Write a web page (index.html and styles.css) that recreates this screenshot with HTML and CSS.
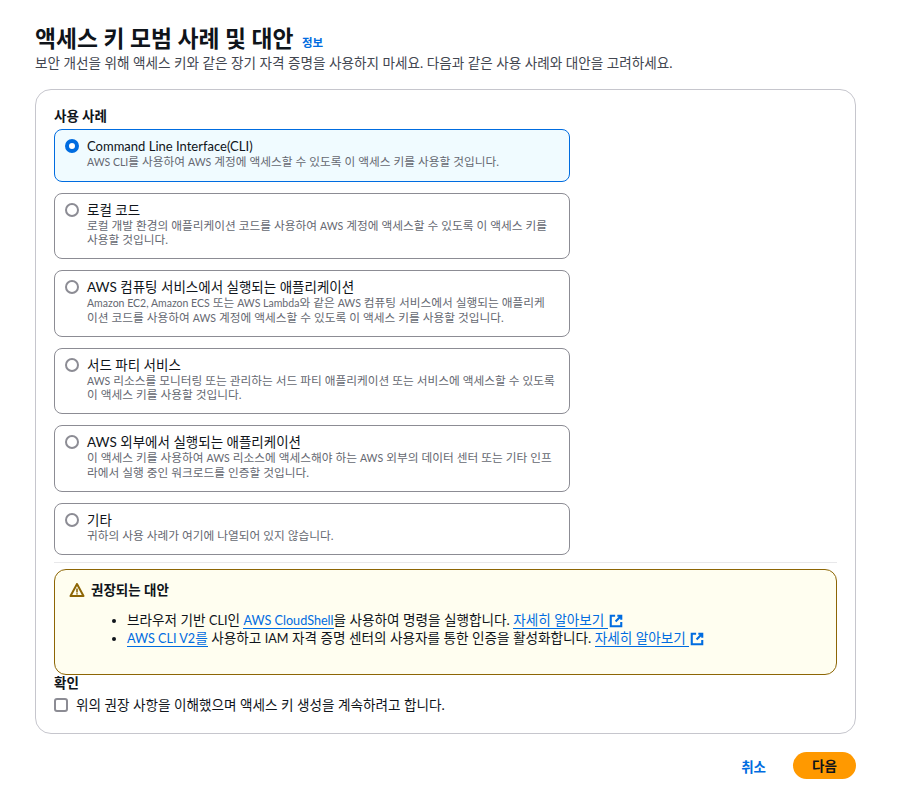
FILE: index.html
```html
<!DOCTYPE html>
<html lang="ko">
<head>
<meta charset="utf-8">
<title>액세스 키 모범 사례 및 대안</title>
<link rel="stylesheet" href="styles.css">
</head>
<body>
<main class="page">
  <header class="head">
    <h1 class="title">액세스 키 모범 사례 및 대안 <a class="info" href="#">정보</a></h1>
    <p class="desc">보안 개선을 위해 액세스 키와 같은 장기 자격 증명을 사용하지 마세요. 다음과 같은 사용 사례와 대안을 고려하세요.</p>
  </header>
  <section class="card">
    <div class="label">사용 사례</div>
    <div class="options">
      <div class="option selected">
        <span class="radio on"></span>
        <div class="otext"><div class="oname"><span class="en">Command Line Interface(CLI)</span></div><div class="odesc"><span class="en">AWS CLI</span>를 사용하여 <span class="en">AWS</span> 계정에 액세스할 수 있도록 이 액세스 키를 사용할 것입니다.</div></div>
      </div>
      <div class="option">
        <span class="radio"></span>
        <div class="otext"><div class="oname">로컬 코드</div><div class="odesc">로컬 개발 환경의 애플리케이션 코드를 사용하여 <span class="en">AWS</span> 계정에 액세스할 수 있도록 이 액세스 키를<br>사용할 것입니다.</div></div>
      </div>
      <div class="option">
        <span class="radio"></span>
        <div class="otext"><div class="oname">AWS 컴퓨팅 서비스에서 실행되는 애플리케이션</div><div class="odesc"><span class="en">Amazon EC2, Amazon ECS</span> 또는 <span class="en">AWS Lambda</span>와 같은 <span class="en">AWS</span> 컴퓨팅 서비스에서 실행되는 애플리케<br>이션 코드를 사용하여 <span class="en">AWS</span> 계정에 액세스할 수 있도록 이 액세스 키를 사용할 것입니다.</div></div>
      </div>
      <div class="option">
        <span class="radio"></span>
        <div class="otext"><div class="oname">서드 파티 서비스</div><div class="odesc"><span class="en">AWS</span> 리소스를 모니터링 또는 관리하는 서드 파티 애플리케이션 또는 서비스에 액세스할 수 있도록<br>이 액세스 키를 사용할 것입니다.</div></div>
      </div>
      <div class="option">
        <span class="radio"></span>
        <div class="otext"><div class="oname">AWS 외부에서 실행되는 애플리케이션</div><div class="odesc">이 액세스 키를 사용하여 <span class="en">AWS</span> 리소스에 액세스해야 하는 <span class="en">AWS</span> 외부의 데이터 센터 또는 기타 인프<br>라에서 실행 중인 워크로드를 인증할 것입니다.</div></div>
      </div>
      <div class="option">
        <span class="radio"></span>
        <div class="otext"><div class="oname">기타</div><div class="odesc">귀하의 사용 사례가 여기에 나열되어 있지 않습니다.</div></div>
      </div>
    </div>
    <hr class="divider">
    <div class="alert">
      <div class="alert-head">
        <svg class="warn" width="16" height="16" viewBox="0 0 16 16" fill="none" stroke="#8d6605" stroke-width="2" stroke-linejoin="round"><path d="M8 2 1.5 14h13z"/><path d="M8 6.5v4M8 11.2v1.4" stroke-width="1.6"/></svg>
        <span>권장되는 대안</span>
      </div>
      <ul class="alert-list">
        <li>브라우저 기반 <span class="en">CLI</span>인 <a class="link" href="#"><span class="en">AWS CloudShell</span></a>을 사용하여 명령을 실행합니다. <a class="link" href="#">자세히 알아보기 </a><svg class="ext" width="14" height="14" viewBox="0 0 16 16" fill="none" stroke="#006ce0" stroke-width="2.4"><path d="M7 2H2v12h12V9"/><path d="M9.5 2H14v4.5M14 2 7.5 8.5"/></svg></li>
        <li><a class="link" href="#"><span class="en">AWS CLI V2</span>를</a> 사용하고 <span class="en">IAM</span> 자격 증명 센터의 사용자를 통한 인증을 활성화합니다. <a class="link" href="#">자세히 알아보기 </a><svg class="ext" width="14" height="14" viewBox="0 0 16 16" fill="none" stroke="#006ce0" stroke-width="2.4"><path d="M7 2H2v12h12V9"/><path d="M9.5 2H14v4.5M14 2 7.5 8.5"/></svg></li>
      </ul>
    </div>
    <div class="label confirm">확인</div>
    <label class="check"><span class="box"></span><span>위의 권장 사항을 이해했으며 액세스 키 생성을 계속하려고 합니다.</span></label>
  </section>
  <footer class="actions">
    <a class="cancel" href="#">취소</a>
    <button class="next">다음</button>
  </footer>
</main>
</body>
</html>
```
FILE: styles.css
```css
* { box-sizing: border-box; }
html, body { margin: 0; background: #fff; }
body {
  font-family: Lato, "Noto Sans CJK KR", sans-serif;
  color: #0f141a;
  font-size: 13.5px;
}
.page { width: 902px; padding: 23px 46px 0 35px; }
.head { height: 66px; }
.title {
  margin: 0;
  font-size: 22.8px;
  line-height: 30px;
  font-weight: 700;
}
.info { font-size: 11.5px; font-weight: 700; color: #006ce0; text-decoration: none; margin-left: 3px; line-height: 1; }
.desc { margin: 2px 0 0; font-size: 13.6px; line-height: 16px; color: #424650; }
.card {
  height: 645px;
  border: 1px solid #c6c6cd;
  border-radius: 16px;
  padding: 18px;
}
.label { font-size: 13.5px; font-weight: 700; line-height: 16px; }
.options { width: 516px; margin-top: 5px; display: flex; flex-direction: column; gap: 11px; }
.option {
  display: flex;
  gap: 8px;
  border: 1px solid #8c8c94;
  border-radius: 8px;
  padding: 8px 10px 11px;
  min-height: 52.5px;
}
.option.selected { border-color: #006ce0; background: #f0fbff; }
.radio {
  flex: none;
  width: 14px;
  height: 14px;
  margin-top: 1px;
  border-radius: 50%;
  border: 2px solid #8c8c94;
  background: #fff;
}
.radio.on { border: 4px solid #006ce0; }
.otext { white-space: nowrap; }
.en { line-height: 1; }
.oname { font-size: 13.5px; line-height: 16px; }
.oname .en { font-size: .965em; }
.odesc { font-size: 11.7px; line-height: 14.75px; color: #656871; }
.odesc .en { font-size: .9em; }
.divider { margin: 7px 0 6px; border: 0; border-top: 1px solid #e8e8ea; }
.alert {
  height: 106px;
  border: 1px solid #8d6605;
  border-radius: 12px;
  background: #fffef0;
  padding: 12px 14px;
}
.alert-head { display: flex; align-items: center; gap: 6px; font-weight: 700; font-size: 13.5px; line-height: 16px; }
.warn { flex: none; }
.alert-list { margin: 13px 0 0; padding-left: 58px; font-size: 13.6px; line-height: 18px; }
.alert-list .en { font-size: .93em; }
.link { color: #006ce0; text-decoration: none; border-bottom: 1px solid #006ce0; }
.ext { vertical-align: -3px; margin-left: 1px; }
.confirm { margin-top: 0; }
.check { display: flex; align-items: center; gap: 8px; margin-top: 5px; font-size: 13.6px; line-height: 18px; }
.box { width: 14px; height: 14px; border: 2px solid #8c8c94; border-radius: 3px; background: #fff; }
.actions { display: flex; justify-content: flex-end; align-items: center; gap: 27px; margin-top: 18px; }
.cancel { color: #006ce0; font-weight: 700; font-size: 13.5px; text-decoration: none; }
.next {
  width: 63px;
  height: 27px;
  padding: 0 0 2px;
  border: 0;
  border-radius: 14px;
  background: #ff9900;
  color: #0f141a;
  font: 700 13.5px Lato, "Noto Sans CJK KR", sans-serif;
}
```
